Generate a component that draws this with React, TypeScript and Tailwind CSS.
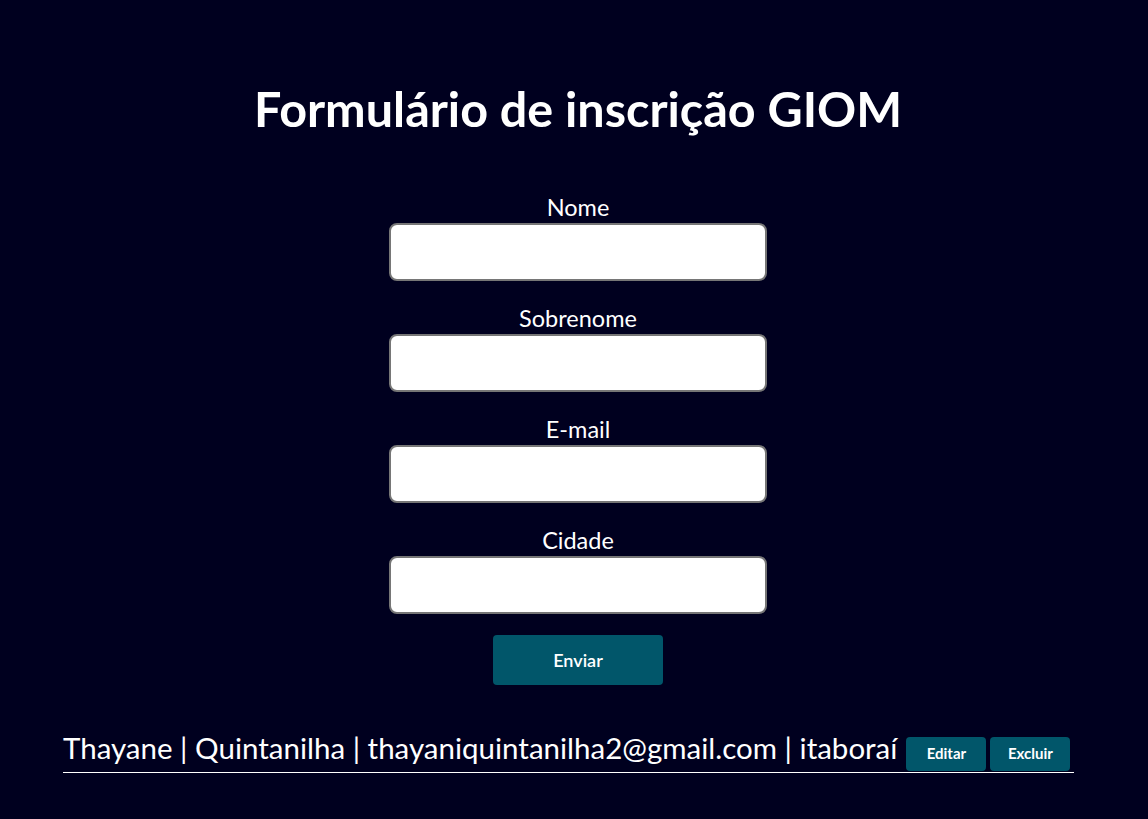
const fields = ["Nome", "Sobrenome", "E-mail", "Cidade"];

export default function App() {
  return (
    <div className="min-h-screen bg-[#00001f] pl-[8px] pt-[79px] font-['Lato',sans-serif] text-white">
      <h1 className="text-center text-[48.5px] font-bold leading-[1.2]">Formulário de inscrição GIOM</h1>

      <form className="mt-[58px] flex flex-col items-center" onSubmit={(e) => e.preventDefault()}>
        {fields.map((f) => (
          <div key={f} className="mb-[25px] flex flex-col items-center">
            <label className="text-[23.5px] leading-[24px]">{f}</label>
            <input
              type="text"
              className="mt-[4px] h-[58px] w-[378px] rounded-[8px] border-2 border-[#767676] bg-white px-3 text-black outline-none"
            />
          </div>
        ))}
        <button
          type="submit"
          className="-mt-[4px] h-[50px] w-[170px] rounded-[4px] bg-[#01566a] text-[18px] font-semibold text-white"
        >
          Enviar
        </button>
      </form>

      <div className="ml-[55px] mt-[45px] flex w-[1011px] items-end border-b border-white">
        <span className="pb-[6px] text-[29.5px] leading-[1.2]">
          Thayane | Quintanilha | thayaniquintanilha2@gmail.com | itaboraí
        </span>
        <button className="mb-[1px] ml-[9px] h-[34px] w-[80px] rounded-[4px] bg-[#01566a] text-[15px] font-bold text-white">
          Editar
        </button>
        <button className="mb-[1px] ml-[4px] h-[34px] w-[80px] rounded-[4px] bg-[#01566a] text-[15px] font-bold text-white">
          Excluir
        </button>
      </div>
    </div>
  );
}
